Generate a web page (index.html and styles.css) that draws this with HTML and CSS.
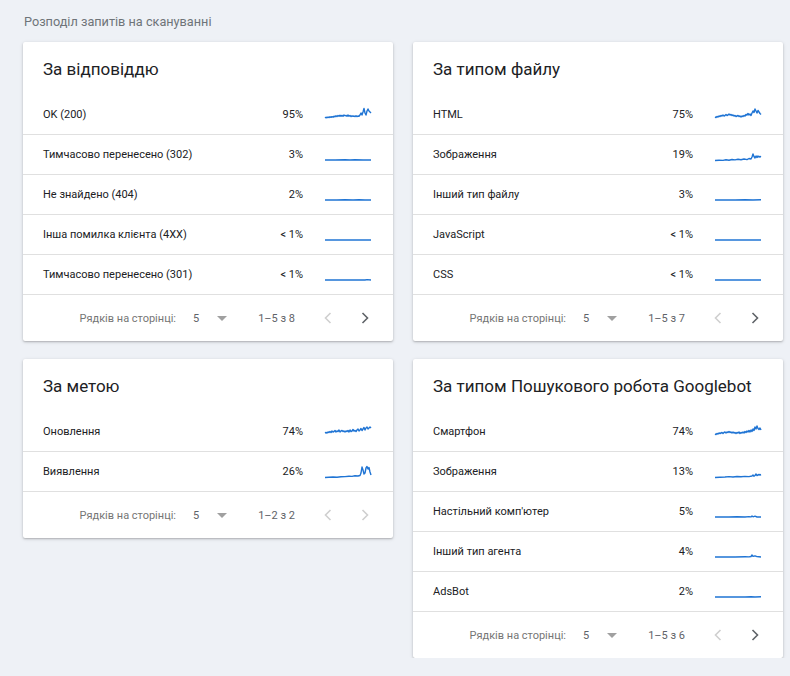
FILE: index.html
```html
<!DOCTYPE html>
<html lang="uk">
<head>
<meta charset="utf-8">
<title>Розподіл запитів на сканування</title>
<link rel="stylesheet" href="styles.css">
</head>
<body>
<div class="page">
  <div class="page-title">Розподіл запитів на скануванні</div>
  <div class="grid">
    <div class="col">
      <section class="card">
        <h2 class="card-title">За відповіддю</h2>
        <div class="row"><span class="label">OK (200)</span><span class="pct">95%</span>
          <svg class="spark" viewBox="0 0 46 16"><polyline points="0,11 1,10.2 2,10.8 3,10 4,10.6 5,9.8 6,10.4 7,9.6 8,10.2 9,9.2 10,9.8 11,8.8 12,9.6 13,8.5 14,9.3 15,8.2 16,9.2 17,8.4 18,9.2 19,8 20,8.8 21,8.4 22,9.2 23,8 24,9.2 25,8.5 26,9.6 27,8.8 28,9.4 29,9 30,9.6 31,8.8 32,9.6 33,9 34,9.2 35,8 36,6 37,8 38,5 39,1.5 40,6 41,8 42,4 43,2 44,4 45,5 46,6"/></svg></div>
        <div class="row"><span class="label">Тимчасово перенесено (302)</span><span class="pct">3%</span>
          <svg class="spark" viewBox="0 0 46 16"><polyline points="0,13 10,13 20,12.8 25,13 30,12.8 38,13 46,13"/></svg></div>
        <div class="row"><span class="label">Не знайдено (404)</span><span class="pct">2%</span>
          <svg class="spark" viewBox="0 0 46 16"><polyline points="0,13 12,13 20,12.8 28,13 34,12.7 40,13 46,13"/></svg></div>
        <div class="row"><span class="label">Інша помилка клієнта (4XX)</span><span class="pct">&lt; 1%</span>
          <svg class="spark" viewBox="0 0 46 16"><polyline points="0,13 46,13"/></svg></div>
        <div class="row"><span class="label">Тимчасово перенесено (301)</span><span class="pct">&lt; 1%</span>
          <svg class="spark" viewBox="0 0 46 16"><polyline points="0,13 40,13 42,12.6 46,13"/></svg></div>
        <div class="pager">
          <span class="pager-label">Рядків на сторінці:</span>
          <span class="pager-size">5</span>
          <span class="pager-caret"></span>
          <span class="pager-range">1–5 з 8</span>
          <svg class="chev off" viewBox="0 0 8 12"><polyline points="6.5,1 1.5,6 6.5,11"/></svg>
          <svg class="chev" viewBox="0 0 8 12"><polyline points="1.5,1 6.5,6 1.5,11"/></svg>
        </div>
      </section>
      <section class="card">
        <h2 class="card-title">За метою</h2>
        <div class="row"><span class="label">Оновлення</span><span class="pct">74%</span>
          <svg class="spark" viewBox="0 0 46 16"><polyline points="0,9 1,8.5 2,9 3,8 4,8.5 5,7.5 6,8.5 7,7 8,8 9,7.5 10,6.5 11,8 12,7 13,7.5 14,6 15,8 16,7 17,6.5 18,7.5 19,7 20,8 21,7 22,7.5 23,6.5 24,8 25,6 26,7.5 27,7 28,5.5 29,7 30,6.5 31,7.5 32,6 33,5 34,7 35,6 36,4.5 37,6.5 38,5 39,3.5 40,6 41,4 42,3 43,5 44,4 45,3 46,4"/></svg></div>
        <div class="row"><span class="label">Виявлення</span><span class="pct">26%</span>
          <svg class="spark" viewBox="0 0 46 16"><polyline points="0,13.5 4,13.2 8,13 12,13.2 16,12.8 20,12.6 24,12.2 27,12.4 30,11.8 33,12 35,11.5 36,9 37,3 38,6 39,10 40,9 41,4 42,2.5 43,5 44,3.5 45,8 46,11"/></svg></div>
        <div class="pager">
          <span class="pager-label">Рядків на сторінці:</span>
          <span class="pager-size">5</span>
          <span class="pager-caret"></span>
          <span class="pager-range">1–2 з 2</span>
          <svg class="chev off" viewBox="0 0 8 12"><polyline points="6.5,1 1.5,6 6.5,11"/></svg>
          <svg class="chev off" viewBox="0 0 8 12"><polyline points="1.5,1 6.5,6 1.5,11"/></svg>
        </div>
      </section>
    </div>
    <div class="col">
      <section class="card">
        <h2 class="card-title">За типом файлу</h2>
        <div class="row"><span class="label">HTML</span><span class="pct">75%</span>
          <svg class="spark" viewBox="0 0 46 16"><polyline points="0,10 1,10.5 2,9.5 3,10 4,9 5,9.5 6,8.5 7,9 8,8 9,9 10,8.5 11,7.5 12,8.5 13,8 14,7 15,8 16,7.5 17,8.5 18,8 19,9 20,8.5 21,9.5 22,9 23,8.5 24,9.5 25,9 26,10 27,9 28,9.5 29,8.5 30,9 31,7.5 32,8 33,6.5 34,8 35,7 36,8.5 37,6 38,4 39,5.5 40,2 41,4 42,6 43,3.5 44,5 45,6.5 46,7.5"/></svg></div>
        <div class="row"><span class="label">Зображення</span><span class="pct">19%</span>
          <svg class="spark" viewBox="0 0 46 16"><polyline points="0,13.5 4,13.2 8,13.4 11,12.8 14,13.2 17,12.5 20,12.9 23,12.3 26,12.8 29,12 32,12.6 34,11.5 36,12 37,10 38,7 39,9.5 40,11 41,9 42,10.5 43,9 44,10 45,9.5 46,10"/></svg></div>
        <div class="row"><span class="label">Інший тип файлу</span><span class="pct">3%</span>
          <svg class="spark" viewBox="0 0 46 16"><polyline points="0,13 20,13 30,12.8 38,13 46,12.8"/></svg></div>
        <div class="row"><span class="label">JavaScript</span><span class="pct">&lt; 1%</span>
          <svg class="spark" viewBox="0 0 46 16"><polyline points="0,13 46,13"/></svg></div>
        <div class="row"><span class="label">CSS</span><span class="pct">&lt; 1%</span>
          <svg class="spark" viewBox="0 0 46 16"><polyline points="0,13 46,13"/></svg></div>
        <div class="pager">
          <span class="pager-label">Рядків на сторінці:</span>
          <span class="pager-size">5</span>
          <span class="pager-caret"></span>
          <span class="pager-range">1–5 з 7</span>
          <svg class="chev off" viewBox="0 0 8 12"><polyline points="6.5,1 1.5,6 6.5,11"/></svg>
          <svg class="chev" viewBox="0 0 8 12"><polyline points="1.5,1 6.5,6 1.5,11"/></svg>
        </div>
      </section>
      <section class="card">
        <h2 class="card-title">За типом Пошукового робота Googlebot</h2>
        <div class="row"><span class="label">Смартфон</span><span class="pct">74%</span>
          <svg class="spark" viewBox="0 0 46 16"><polyline points="0,10 1,10.5 2,9.5 3,10 4,9 5,9.5 6,9 7,8.5 8,9.5 9,8.5 10,8 11,9 12,8 13,8.5 14,7.5 15,8.5 16,8 17,9 18,8 19,9 20,8.5 21,9.5 22,8.5 23,9 24,8 25,9.5 26,8.5 27,9 28,8 29,9 30,7.5 31,8.5 32,7 33,8 34,6.5 35,8 36,6 37,7.5 38,5 39,6.5 40,3 41,5 42,2 43,4.5 44,5.5 45,4 46,6"/></svg></div>
        <div class="row"><span class="label">Зображення</span><span class="pct">13%</span>
          <svg class="spark" viewBox="0 0 46 16"><polyline points="0,13.5 5,13.2 10,13 14,12.6 18,13 22,12.5 26,12.8 30,12.4 34,12.6 37,12 38,11 39,12.2 40,11.5 41,10 42,11.5 43,11 44,10.5 45,11 46,10.5"/></svg></div>
        <div class="row"><span class="label">Настільний комп'ютер</span><span class="pct">5%</span>
          <svg class="spark" viewBox="0 0 46 16"><polyline points="0,13 14,13 22,12.8 30,13 34,12.6 36,12.9 37,12 38,12.8 40,12.2 42,13 46,13"/></svg></div>
        <div class="row"><span class="label">Інший тип агента</span><span class="pct">4%</span>
          <svg class="spark" viewBox="0 0 46 16"><polyline points="0,13 20,13 30,12.8 34,12.9 36,12.5 37,11 38,12.4 40,11.8 42,12.6 44,12.8 46,13"/></svg></div>
        <div class="row"><span class="label">AdsBot</span><span class="pct">2%</span>
          <svg class="spark" viewBox="0 0 46 16"><polyline points="0,13 30,13 36,12.8 40,13 46,12.8"/></svg></div>
        <div class="pager">
          <span class="pager-label">Рядків на сторінці:</span>
          <span class="pager-size">5</span>
          <span class="pager-caret"></span>
          <span class="pager-range">1–5 з 6</span>
          <svg class="chev off" viewBox="0 0 8 12"><polyline points="6.5,1 1.5,6 6.5,11"/></svg>
          <svg class="chev" viewBox="0 0 8 12"><polyline points="1.5,1 6.5,6 1.5,11"/></svg>
        </div>
      </section>
    </div>
  </div>
</div>
</body>
</html>
```
FILE: styles.css
```css
* { box-sizing: border-box; }
html, body { margin: 0; padding: 0; }
body {
  background: #eef1f6;
  font-family: Roboto, "Noto Sans", "Liberation Sans", sans-serif;
  color: #202124;
}
.page {
  padding: 14px 0 0 23px;
}
.page-title {
  font-size: 12.7px;
  line-height: 16px;
  color: #6f7479;
  padding-left: 1px;
  margin-bottom: 12px;
}
.grid {
  display: flex;
  gap: 20px;
  align-items: flex-start;
}
.col {
  display: flex;
  flex-direction: column;
  gap: 18px;
  width: 370px;
}
.card {
  background: #fff;
  border-radius: 2px;
  box-shadow: 0 1px 2px rgba(0,0,0,0.22), 0 1px 4px rgba(0,0,0,0.10);
}
.card-title {
  margin: 0;
  font-weight: 400;
  font-size: 17px;
  line-height: 24px;
  padding: 15px 20px 13px 20px;
  white-space: nowrap;
  color: #202124;
}
.row {
  display: flex;
  align-items: center;
  height: 40px;
  padding: 0 22px 0 20px;
  border-bottom: 1px solid #e0e0e0;
  font-size: 11px;
}
.row:first-of-type {
  margin-top: 1px;
}
.label {
  flex: 1;
  white-space: nowrap;
}
.pct {
  margin-right: 22px;
  text-align: right;
}
.spark {
  width: 46px;
  height: 16px;
  display: block;
  overflow: visible;
}
.spark polyline {
  fill: none;
  stroke: #1f74d4;
  stroke-width: 1.4;
  stroke-linejoin: round;
}
.pager {
  display: flex;
  align-items: center;
  justify-content: flex-end;
  height: 46px;
  padding-right: 24px;
  font-size: 11px;
  color: #757575;
}
.pager-size {
  margin-left: 17px;
  color: #5f6368;
}
.pager-caret {
  margin-left: 18px;
  width: 0;
  height: 0;
  border-left: 5px solid transparent;
  border-right: 5px solid transparent;
  border-top: 5px solid #a0a0a0;
}
.pager-range {
  margin-left: 31px;
  color: #5f6368;
}
.chev {
  width: 8px;
  height: 12px;
  margin-left: 29px;
  display: block;
}
.chev polyline {
  fill: none;
  stroke: #5f6368;
  stroke-width: 1.6;
}
.chev.off polyline {
  stroke: #cfcfcf;
}
```
